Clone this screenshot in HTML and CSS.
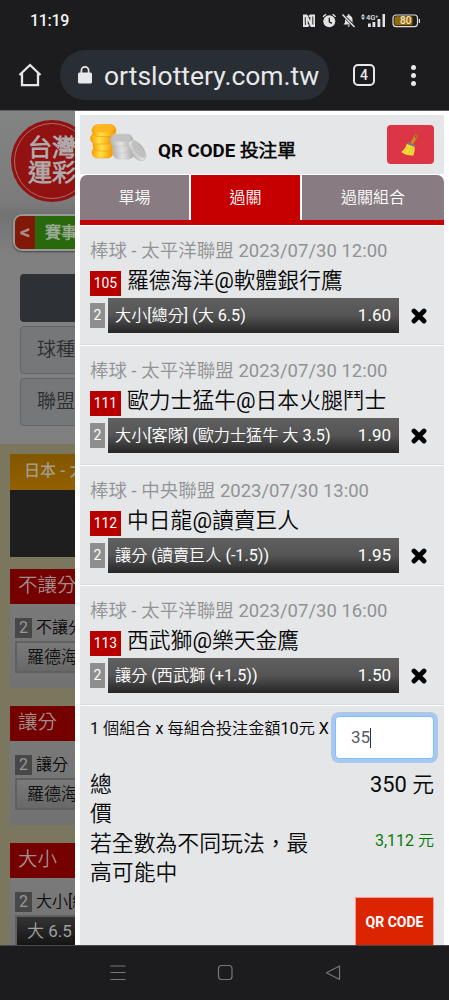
FILE: index.html
```html
<!DOCTYPE html>
<html lang="zh-Hant">
<head>
<meta charset="utf-8">
<title>QR CODE 投注單</title>
<link rel="stylesheet" href="styles.css">
</head>
<body>
<div class="phone">
  <header class="chrome">
    <div class="status">
      <span class="clock">11:19</span>
      <svg class="status-icons" viewBox="0 0 120 18" width="120" height="18">
        <path fill="#e2e2e2" d="M2 3.500h4.200l3 6.500v-4h-1.500v-1.500l1.500-1h4.800v12.500h-4.200l-3-6.500v4h1.500v1.500l-1.500 1h-4.800z"/>
        <path d="M4.300 6v8M11.800 5.500v8" stroke="#1c1c1e" stroke-width=".9"/>
        <circle cx="28.300" cy="10.300" r="6" fill="#e2e2e2"/>
        <path d="M28.300 6.800v4l2.500 1.600" stroke="#1c1c1e" stroke-width="1.300" fill="none"/>
        <path d="M22 5.800l3-2.600M34.600 5.800l-3-2.600" stroke="#e2e2e2" stroke-width="1.500"/>
        <path fill="#e2e2e2" d="M42.500 13.500l1.500-2v-3c0-2.200 1.200-3.500 2.900-4v-1.300h1.600v1.300c1.900.500 3 1.900 3 4v3l1.500 2zM46.300 14.500h3l-1.500 1.600z"/>
        <path d="M41.500 3.500l12.300 12.500" stroke="#1c1c1e" stroke-width="3"/>
        <path d="M41.500 3.500l12 12.500" stroke="#e2e2e2" stroke-width="1.500"/>
        <path fill="#e2e2e2" d="M60 5.500l2-2.500 2 2.500zM60 6.500l2 2.500 2-2.500zM67 12.500h2.800v3.500h-2.800zM71.500 11h2.800v5h-2.800zM76.500 8h2.800v8h-2.800zM81.500 3h2.500v13h-2.500z"/>
        <text x="65" y="8.500" class="net">4G⁺</text>
        <rect x="92" y="4" width="24.500" height="11.600" rx="3" fill="none" stroke="#ddd" stroke-width="1.200"/>
        <rect x="93.500" y="5.300" width="18" height="9" rx="1.500" fill="#93690d"/>
        <path d="M118.400 8v4" stroke="#ddd" stroke-width="1.200"/>
        <text x="99" y="13.400" class="batt">80</text>
      </svg>
    </div>
    <div class="toolbar">
      <svg class="home" viewBox="0 0 24 24" width="24" height="24"><path d="M1.500 12L12 2l10.500 10M4 10.500v11.700h16v-11.700" fill="none" stroke="#e6e6e8" stroke-width="2.300"/></svg>
      <div class="omnibox">
        <svg viewBox="0 0 14 18" width="14" height="18"><rect width="14" height="11" y="6.500" rx="1.500" fill="#e8e8ea"/><path d="M3.400 7V4.500a3.600 3.600 0 0 1 7.200 0V7" fill="none" stroke="#e8e8ea" stroke-width="1.700"/></svg>
        <div class="url"><span>ortslottery.com.tw</span></div>
      </div>
      <div class="tabcount">4</div>
      <div class="dots"><i></i><i></i><i></i></div>
    </div>
  </header>

  <main class="content">
    <aside class="page">
      <section class="page-top">
        <div class="logo"><div class="ring">台灣<br>運彩</div></div>
        <div class="pill"><b>&lt;</b><span>賽事</span></div>
        <div class="darkbtn"></div>
        <div class="select">球種</div>
        <div class="select">聯盟</div>
      </section>
      <section class="page-list">
        <div class="league">日本 - 太</div>
        <div class="match"></div>
        <div class="market"><h3>不讓分</h3><p><em>2</em>不讓分</p><div class="opt">羅德海</div></div>
        <div class="market"><h3>讓分</h3><p><em>2</em>讓分</p><div class="opt">羅德海</div></div>
        <div class="market"><h3>大小</h3><p><em>2</em>大小[總</p><div class="opt dark">大 6.5</div></div>
      </section>
    </aside>

    <section class="drawer">
      <div class="head">
        <svg class="coins" viewBox="0 0 58 42" width="58" height="42">
          <defs>
            <linearGradient id="gold"><stop offset="0" stop-color="#f9a000"/><stop offset=".4" stop-color="#ffdf4a"/><stop offset="1" stop-color="#f79400"/></linearGradient>
            <linearGradient id="silver"><stop offset="0" stop-color="#b2b2b2"/><stop offset=".45" stop-color="#e2e2e2"/><stop offset="1" stop-color="#aaa"/></linearGradient>
          </defs>
          <g fill="url(#gold)" stroke="#ee9500" stroke-width=".5">
            <rect x="2" y="26" width="21" height="11" rx="5.500"/><rect x="3" y="19" width="21" height="11" rx="5.500"/>
            <rect x=".5" y="12" width="22" height="11" rx="5.500"/><rect x="2" y="3.500" width="24" height="12" rx="6"/>
          </g>
          <ellipse cx="14" cy="7.500" rx="10.500" ry="4" fill="#ffb61b"/>
          <g fill="url(#silver)" stroke="#bbb" stroke-width=".4">
            <rect x="23" y="27" width="21" height="11" rx="5.500"/><rect x="22" y="20" width="22" height="12" rx="6"/><rect x="20" y="13" width="23" height="12" rx="6"/>
            <ellipse cx="47" cy="29.500" rx="6.500" ry="12" transform="rotate(-37 47 29.500)"/>
          </g>
          <ellipse cx="31.500" cy="17" rx="9.500" ry="3.800" fill="#c2c2c2"/>
          <ellipse cx="48" cy="28.500" rx="3.800" ry="9.500" fill="#c0c0c0" transform="rotate(-37 48 28.500)"/>
        </svg>
        <h1>QR CODE 投注單</h1>
        <div class="clear">
          <svg viewBox="0 0 22 26" width="22" height="26">
            <path d="M11.500 12L16 4" stroke="#c98a25" stroke-width="3.400" stroke-linecap="round"/><path d="M15.500 5l.6-1.200" stroke="#70571e" stroke-width="1.400" stroke-linecap="round"/>
            <path d="M7 11.500l7.500 3c.5 3.500-.2 6.500-1.200 9-4.500.300-9-.8-12-3.500 3-2 4.500-5 5.700-8.500z" fill="#f7dc38"/>
            <path d="M8.500 14l-4 6.500M10.700 15l-2 7.500M12.800 15.500l-1 7" stroke="#e0b526" stroke-width=".7"/>
            <path d="M7.500 11l7.300 3" stroke="#7a7880" stroke-width="2.300"/>
          </svg>
        </div>
      </div>
      <nav class="tabs"><span>單場</span><span class="on">過關</span><span>過關組合</span></nav>

      <article class="bet">
        <div class="cat">棒球 - 太平洋聯盟 2023/07/30 12:00</div>
        <div class="teams"><b>105</b><span>羅德海洋@軟體銀行鷹</span></div>
        <div class="pick"><i>2</i><div class="bar"><span>大小[總分] (大 6.5)</span><strong>1.60</strong></div><svg viewBox="0 0 16 16"><path d="M3 3l10 10M13 3L3 13"/></svg></div>
      </article>
      <article class="bet">
        <div class="cat">棒球 - 太平洋聯盟 2023/07/30 12:00</div>
        <div class="teams"><b>111</b><span>歐力士猛牛@日本火腿鬥士</span></div>
        <div class="pick"><i>2</i><div class="bar"><span>大小[客隊] (歐力士猛牛 大 3.5)</span><strong>1.90</strong></div><svg viewBox="0 0 16 16"><path d="M3 3l10 10M13 3L3 13"/></svg></div>
      </article>
      <article class="bet">
        <div class="cat">棒球 - 中央聯盟 2023/07/30 13:00</div>
        <div class="teams"><b>112</b><span>中日龍@讀賣巨人</span></div>
        <div class="pick"><i>2</i><div class="bar"><span>讓分 (讀賣巨人 (-1.5))</span><strong>1.95</strong></div><svg viewBox="0 0 16 16"><path d="M3 3l10 10M13 3L3 13"/></svg></div>
      </article>
      <article class="bet">
        <div class="cat">棒球 - 太平洋聯盟 2023/07/30 16:00</div>
        <div class="teams"><b>113</b><span>西武獅@樂天金鷹</span></div>
        <div class="pick"><i>2</i><div class="bar"><span>讓分 (西武獅 (+1.5))</span><strong>1.50</strong></div><svg viewBox="0 0 16 16"><path d="M3 3l10 10M13 3L3 13"/></svg></div>
      </article>

      <div class="summary">
        <div class="stake"><span>1 個組合 x 每組合投注金額10元 X</span><div class="input">35</div></div>
        <div class="total"><span>總<br>價</span><b>350 元</b></div>
        <div class="max"><span>若全數為不同玩法，最<br>高可能中</span><b>3,112 元</b></div>
        <div class="qr">QR CODE</div>
      </div>
    </section>
  </main>

  <footer class="navbar">
    <svg viewBox="0 0 449 55" width="449" height="55" fill="none" stroke="#77777a" stroke-width="1.200">
      <path d="M110.500 21h15M110.500 27.500h15M110.500 34.500h15"/>
      <rect x="218.500" y="20.500" width="13.500" height="14" rx="3"/>
      <path d="M339.500 21v13.500l-13-6.700z" stroke-linejoin="round"/>
    </svg>
  </footer>
</div>
</body>
</html>
```
FILE: styles.css
```css
* { box-sizing: border-box; }
body { margin: 0; background: #1c1c1e; font-family: Roboto, "Noto Sans CJK TC DemiLight", "Noto Sans CJK TC", sans-serif; }
h1, h3, p { margin: 0; font-weight: 400; }
i, em { font-style: normal; }
.phone { width: 449px; height: 1000px; display: flex; flex-direction: column; overflow: hidden; }

.chrome { height: 110px; flex: none; background: #1c1c1e; color: #e8e8ea; }
.status { height: 50px; padding: 11px 29px 0 30px; display: flex; justify-content: space-between; align-items: flex-start; }
.clock { font: 500 16px/19px Roboto, sans-serif; color: #f2f2f2; letter-spacing: -.3px; }
.status-icons { margin-right: -1px; }
.net { font: 500 7.5px Roboto, sans-serif; fill: #e2e2e2; }
.batt { font: 500 10px Roboto, sans-serif; fill: #f5e9c8; }
.toolbar { height: 50px; display: flex; align-items: center; }
.home { margin-left: 18px; }
.omnibox { margin-left: 18px; width: 269px; height: 50px; border-radius: 25px; background: #292e35; display: flex; align-items: center; padding-left: 18px; }
.omnibox svg { flex: none; }
.url { margin-left: 12px; width: 220px; font: 400 26.5px/34px Roboto, sans-serif; white-space: nowrap; padding-top: 2px; }
.tabcount { margin-left: 24px; width: 22px; height: 22px; border: 2px solid #e8e8ea; border-radius: 5px; text-align: center; font: 500 14px/18px Roboto, sans-serif; }
.dots { margin-left: 36px; display: grid; gap: 3px; }
.dots i { width: 5px; height: 5px; border-radius: 50%; background: #e8e8ea; }

.content { flex: 1; min-height: 0; display: flex; overflow: hidden; border-top: 1px solid #5d5d5f; }
.page { width: 75px; flex: none; overflow: hidden; white-space: nowrap; }
.page-top { height: 333px; padding: 9px 0 0 11px; background: linear-gradient(#828383 0, #7c7c7c 90px, #727272 103px, #808080 145px); }
.logo { width: 82px; height: 82px; border-radius: 50%; background: #921111; padding: 3px; }
.ring { height: 76px; border: 1.5px solid #a56d6d; border-radius: 50%; padding: 12px 0 0 13px; color: #b0aaaa; font-weight: 700; font-size: 24px; line-height: 25px; }
.pill { width: 150px; height: 37px; margin: 12px 0 0 2px; border: 2px solid #989898; border-radius: 9px; box-shadow: 0 1px 2px #444; background: #286a0b; overflow: hidden; display: flex; line-height: 33px; }
.pill b { width: 20px; background: #821807; color: #a98c86; font-size: 21px; text-align: center; }
.pill span { padding-left: 10px; color: #9aa792; font-size: 16px; font-weight: 700; }
.darkbtn { width: 120px; height: 48px; margin: 23px 0 4px 9px; border-radius: 4px; background: #2d3136; }
.select { width: 120px; height: 48px; margin: 0 0 4px 9px; border: 1px solid #636669; border-radius: 4px; padding-left: 16px; background: #757778; color: #2b2e31; font-size: 19px; line-height: 45px; }
.page-list { height: 501px; padding: 10px 0 0 10px; background: #7b775f; }
.league { height: 36px; padding-left: 14px; background: linear-gradient(#825700, #926000); color: #a49c86; font-family: Roboto, "Noto Sans CJK TC", sans-serif; font-size: 16px; font-weight: 500; line-height: 34px; }
.match { height: 67px; background: #1e1e1e; margin-bottom: 12px; }
.market { height: 119px; margin-bottom: 18px; background: linear-gradient(#7c7c7c, #727272); }
.market h3 { height: 35px; padding-left: 8px; background: #740000; color: #a18d8d; font-size: 19.5px; line-height: 34px; }
.market p { height: 37px; padding: 14px 0 0 5px; display: flex; font-size: 16px; line-height: 20px; color: #080808; }
.market em { width: 17px; height: 20px; flex: none; margin-right: 4px; background: #474747; color: #999; text-align: center; }
.opt { width: 120px; height: 32px; margin-left: 5px; padding-left: 10px; border: 2px solid #606060; background: linear-gradient(#7a7a7a, #686868); color: #111; font-size: 17px; line-height: 28px; }
.opt.dark { background: linear-gradient(#343434, #151515); color: #a0a0a0; }

.drawer { width: 374px; height: 834px; background: #fff; padding: 4px 5px 0; overflow: hidden; }
.head { height: 59px; background: #e4e6e8; display: flex; padding-left: 10px; margin-bottom: 1px; }
.coins { margin-top: 6px; flex: none; }
.head h1 { margin: 23px 0 0 10px; width: 229px; font-size: 18.7px; font-weight: 700; line-height: 27px; white-space: nowrap; color: #080808; }
.clear { width: 47px; height: 39px; margin-top: 10px; border-radius: 4px; background: #dc3545; display: flex; align-items: center; justify-content: center; }
.tabs { height: 50px; display: grid; grid-template-columns: 109px 109px 142px; gap: 2px; border-bottom: 5px solid #c60000; border-radius: 7px 7px 0 0; overflow: hidden; margin-bottom: 1px; }
.tabs span { background: #887c82; color: #fff; font-size: 16px; line-height: 45px; text-align: center; }
.tabs .on { background: #c60000; height: 46px; }

.bet { height: 120px; padding: 10px 10px 0; background: #e4e6e8; border-bottom: 1.500px solid #fff; box-shadow: inset 0 -1px #d8dadb; }
.cat { height: 30px; font-size: 18.5px; line-height: 31px; color: #919294; white-space: nowrap; }
.teams { height: 32px; display: flex; }
.teams b { width: 31px; height: 25px; margin: 5px 6px 0 0; background: #b60000; color: #fff; font-size: 13.8px; font-weight: 400; line-height: 24px; text-align: center; }
.teams span { font-size: 21.8px; line-height: 30px; color: #080808; white-space: nowrap; }
.pick { height: 35px; display: flex; align-items: center; }
.pick i { width: 15px; height: 25px; margin-right: 3px; background: #8e8e8e; color: #fff; font-size: 14px; line-height: 25px; text-align: center; }
.bar { width: 291px; height: 35px; padding: 0 8px 0 7px; background: linear-gradient(#606060, #545454 50%, #252525); color: #fff; display: flex; justify-content: space-between; font-size: 16.15px; line-height: 35px; white-space: nowrap; }
.bar strong { font-size: 17px; font-weight: 400; }
.pick svg { width: 16px; height: 16px; margin-left: 12px; }
.pick path { stroke: #050505; stroke-width: 4.800; stroke-linecap: round; }

.summary { height: 240px; padding: 10px 10px 0; background: #e4e6e8; color: #080808; }
.summary b { font-weight: 400; }
.stake { height: 54px; display: flex; justify-content: space-between; }
.stake span { font-size: 16.15px; line-height: 25px; white-space: nowrap; }
.input { width: 99px; height: 43px; flex: none; border: 1px solid #80bdff; border-radius: 4px; box-shadow: 0 0 0 4px #a9c8ee; background: #fff; padding-left: 15px; color: #555b61; font-size: 17px; line-height: 41px; display: flex; align-items: center; }
.input::after { content: ""; width: 1px; height: 20px; background: #333; }
.total, .max { display: flex; justify-content: space-between; line-height: 29.400px; font-size: 21.850px; }
.max b { font-size: 16px; line-height: 24px; color: #087a08; }
.qr { width: 79px; height: 60px; margin: 9px 0 0 auto; border: 1px solid #ff9a90; background: #db2400; color: #fff; font-size: 14px; font-weight: 700; line-height: 48px; text-align: center; }

.navbar { height: 55px; flex: none; background: #1c1c1e; border-top: 1px solid #48484a; }
.navbar svg { display: block; margin-top: -1px; }
```
